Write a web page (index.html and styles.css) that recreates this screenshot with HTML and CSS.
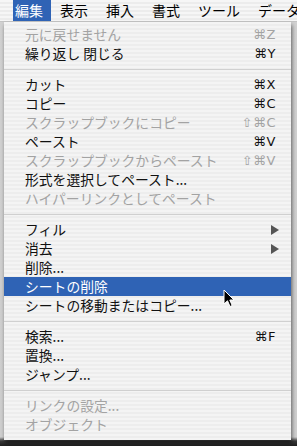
FILE: index.html
```html
<!DOCTYPE html>
<html lang="ja">
<head>
    <meta charset="UTF-8">
    <meta name="viewport" content="width=device-width, initial-scale=1.0">
    <title>編集メニュー</title>
    <link rel="stylesheet" href="styles.css">
</head>
<body>

    <div class="screen">
        <div class="menubar">
            <span class="title active">編集</span>
            <span class="title">表示</span>
            <span class="title">挿入</span>
            <span class="title">書式</span>
            <span class="title">ツール</span>
            <span class="title">データ</span>
        </div>

        <ul class="menu">
            <li class="item disabled"><span class="label">元に戻せません</span><span class="key">⌘Z</span></li>
            <li class="item"><span class="label">繰り返し 閉じる</span><span class="key">⌘Y</span></li>
            <li class="sep"></li>
            <li class="item"><span class="label">カット</span><span class="key">⌘X</span></li>
            <li class="item"><span class="label">コピー</span><span class="key">⌘C</span></li>
            <li class="item disabled"><span class="label">スクラップブックにコピー</span><span class="key">⇧⌘C</span></li>
            <li class="item"><span class="label">ペースト</span><span class="key">⌘V</span></li>
            <li class="item disabled"><span class="label">スクラップブックからペースト</span><span class="key">⇧⌘V</span></li>
            <li class="item"><span class="label">形式を選択してペースト...</span></li>
            <li class="item disabled"><span class="label">ハイパーリンクとしてペースト</span></li>
            <li class="sep"></li>
            <li class="item"><span class="label">フィル</span><span class="arrow"></span></li>
            <li class="item"><span class="label">消去</span><span class="arrow"></span></li>
            <li class="item"><span class="label">削除...</span></li>
            <li class="item selected"><span class="label">シートの削除</span></li>
            <li class="item"><span class="label">シートの移動またはコピー...</span></li>
            <li class="sep"></li>
            <li class="item"><span class="label">検索...</span><span class="key">⌘F</span></li>
            <li class="item"><span class="label">置換...</span></li>
            <li class="item"><span class="label">ジャンプ...</span></li>
            <li class="sep"></li>
            <li class="item disabled"><span class="label">リンクの設定...</span></li>
            <li class="item disabled"><span class="label">オブジェクト</span></li>
        </ul>

        <!-- mouse pointer over the highlighted row -->
        <svg class="cursor" width="12" height="19" viewBox="0 0 12 19">
            <path d="M1 1 L1 15 L4.5 11.8 L7 17.5 L9.2 16.5 L6.8 11 L11 11 Z" fill="#000" stroke="#fff" stroke-width="1" stroke-linejoin="round"/>
        </svg>
    </div>

</body>
</html>
```

FILE: styles.css
```css
body { margin: 0; background: #222; }
.screen { position: relative; width: 297px; height: 446px; overflow: hidden; background: linear-gradient(to bottom, #d2d2d2 0, #cfcfcf 437px, #3a3a3a 441px, #1e1e1e 100%); font-family: "Noto Sans CJK JP", sans-serif; }

.menubar { display: flex; height: 22px; padding-left: 13px; background: repeating-linear-gradient(to bottom, #f6f6f6 0 2px, #ececec 2px 4px); border-bottom: 1px solid #c4c4c4; box-sizing: border-box; }
.title { padding: 0 9px; font-size: 14px; line-height: 21px; color: #000; white-space: nowrap; }
.title.active { padding: 0 8px 0 2px; background: #2f63b5; color: #fff; }

.menu { list-style: none; margin: 0 0 0 4px; padding: 3px 0 6px; width: 287px; background: repeating-linear-gradient(to bottom, #f4f4f4 0 2px, #ededed 2px 4px); box-shadow: 1px 3px 4px rgba(0,0,0,0.55); }
.item { display: flex; align-items: center; height: 19px; padding: 0 15px 0 21px; font-size: 13.8px; line-height: 19px; color: #111; white-space: nowrap; }
.item .label { flex: 1; }
.item.disabled { color: #a3a3a3; }
.item.selected { background: #2f63b5; color: #fff; }
.key { font-family: "DejaVu Sans", sans-serif; font-size: 13px; letter-spacing: 0.5px; }
.arrow { width: 0; height: 0; margin-right: -3px; border-top: 5px solid transparent; border-bottom: 5px solid transparent; border-left: 8px solid #555; }
.sep { height: 12px; display: flex; align-items: center; }
.sep::before { content: ""; flex: 1; height: 1px; background: #d0d0d0; }

.cursor { position: absolute; left: 223px; top: 289px; }
```
